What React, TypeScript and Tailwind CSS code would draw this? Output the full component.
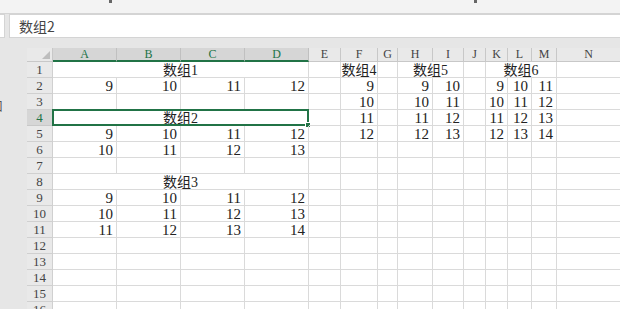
import React from 'react';

// Column letters and their widths in px, as read off the sheet
const columns: { name: string; width: number }[] = [
  { name: 'A', width: 64 },
  { name: 'B', width: 64 },
  { name: 'C', width: 64 },
  { name: 'D', width: 64 },
  { name: 'E', width: 32 },
  { name: 'F', width: 37 },
  { name: 'G', width: 20 },
  { name: 'H', width: 35 },
  { name: 'I', width: 31 },
  { name: 'J', width: 22 },
  { name: 'K', width: 22 },
  { name: 'L', width: 24 },
  { name: 'M', width: 25 },
  { name: 'N', width: 64 },
];

type Cell = { text?: string; span?: number; center?: boolean; selected?: boolean };

const num = (v: string): Cell => ({ text: v });
const empty: Cell = {};
const title = (t: string, span = 1, selected = false): Cell => ({ text: t, span, center: true, selected });

// A small helper for the right-hand groups (F, H:I, K:M)
const side = (f: string, h: string, i: string, k: string, l: string, m: string): Cell[] => [
  empty,
  num(f),
  empty,
  num(h),
  num(i),
  empty,
  num(k),
  num(l),
  num(m),
  empty,
];

const blankRow = (): Cell[] => columns.map(() => empty);

const rows: Cell[][] = [
  [title('数组1', 4), empty, title('数组4'), empty, title('数组5', 2), empty, title('数组6', 3), empty],
  [num('9'), num('10'), num('11'), num('12'), ...side('9', '9', '10', '9', '10', '11')],
  [empty, empty, empty, empty, ...side('10', '10', '11', '10', '11', '12')],
  [title('数组2', 4, true), ...side('11', '11', '12', '11', '12', '13')],
  [num('9'), num('10'), num('11'), num('12'), ...side('12', '12', '13', '12', '13', '14')],
  [num('10'), num('11'), num('12'), num('13'), ...blankRow().slice(4)],
  blankRow(),
  [title('数组3', 4), ...blankRow().slice(4)],
  [num('9'), num('10'), num('11'), num('12'), ...blankRow().slice(4)],
  [num('10'), num('11'), num('12'), num('13'), ...blankRow().slice(4)],
  [num('11'), num('12'), num('13'), num('14'), ...blankRow().slice(4)],
  blankRow(),
  blankRow(),
  blankRow(),
  blankRow(),
  blankRow(),
];

const font = 'font-["Liberation_Serif","Noto_Sans_CJK_SC",serif]';

export default function App() {
  return (
    <div className={`w-[620px] h-[309px] overflow-hidden bg-[#e6e6e6] flex flex-col ${font}`}>
      {/* ribbon remnant at the very top */}
      <div className="h-[14px] shrink-0 bg-[#f3f3f3] border-b border-[#d4d4d4] flex items-start">
        <div className="ml-[109px] w-[3px] h-[3px] bg-[#666]" />
        <div className="ml-[362px] w-[3px] h-[3px] bg-[#666]" />
      </div>

      {/* formula bar */}
      <div className="h-[24px] shrink-0 flex gap-[4px]">
        <div className="w-[5px] bg-white border border-l-0 border-[#d4d4d4]" />
        <div className="flex-1 bg-white border border-r-0 border-[#d4d4d4] flex items-center pl-[9px] text-[14px] text-[#444] font-['Noto_Sans_CJK_SC',sans-serif]">
          数组2
        </div>
      </div>

      <div className="h-[10px] shrink-0" />

      <div className="flex flex-1 min-h-0">
        {/* left pane edge */}
        <div className="w-[27px] shrink-0 overflow-hidden">
          <div className="mt-[52px] -ml-[9px] text-[12px] leading-none text-[#555] font-['Noto_Sans_CJK_SC',sans-serif]">
            口
          </div>
        </div>

        {/* the sheet */}
        <div className="bg-white flex flex-col overflow-hidden">
          {/* column header */}
          <div className="flex h-[14px] shrink-0">
            <div className="w-[26px] shrink-0 bg-[#e9e9e9] border-r border-b border-[#c8c8c8] flex items-end justify-end pr-[2px] pb-[2px]">
              <div className="w-0 h-0 border-l-[8px] border-l-transparent border-b-[8px] border-b-[#bdbdbd]" />
            </div>
            {columns.map((c, i) => (
              <div
                key={c.name}
                style={{ width: c.width }}
                className={
                  i < 4
                    ? 'shrink-0 bg-[#d6d6d6] border-r border-[#c0c0c0] border-b-2 border-b-[#217346] text-[#217346] text-[12px] leading-[13px] text-center'
                    : 'shrink-0 bg-[#e9e9e9] border-r border-b border-[#c8c8c8] text-[#444] text-[12px] leading-[13px] text-center'
                }
              >
                {c.name}
              </div>
            ))}
          </div>

          {rows.map((row, r) => {
            let col = 0;
            const sel = r === 3;
            return (
              <div key={r} className="flex h-[16px] shrink-0">
                <div
                  className={
                    sel
                      ? 'w-[26px] shrink-0 bg-[#d6d6d6] border-r border-b border-[#c8c8c8] text-[#217346] text-[13px] leading-[16px] text-center'
                      : 'w-[26px] shrink-0 bg-[#e9e9e9] border-r border-b border-[#d0d0d0] text-[#444] text-[13px] leading-[16px] text-center'
                  }
                >
                  {r + 1}
                </div>
                {row.map((cell, ci) => {
                  const span = cell.span ?? 1;
                  const width = columns.slice(col, col + span).reduce((s, c) => s + c.width, 0);
                  col += span;
                  return (
                    <div
                      key={ci}
                      style={{ width }}
                      className={`relative shrink-0 border-r border-b border-[#dadada] pt-[1px] leading-[15px] text-[#222] whitespace-nowrap ${
                        cell.center ? 'text-center text-[14px]' : 'text-right pr-[3px] text-[15px]'
                      }`}
                    >
                      {cell.text}
                      {cell.selected && (
                        <div className="absolute -left-[1px] -top-[1px] -right-[1px] -bottom-[1px] border-2 border-[#217346]">
                          <div className="absolute -right-[4px] -bottom-[4px] w-[6px] h-[6px] bg-[#217346] border border-white" />
                        </div>
                      )}
                    </div>
                  );
                })}
              </div>
            );
          })}
        </div>
      </div>
    </div>
  );
}
